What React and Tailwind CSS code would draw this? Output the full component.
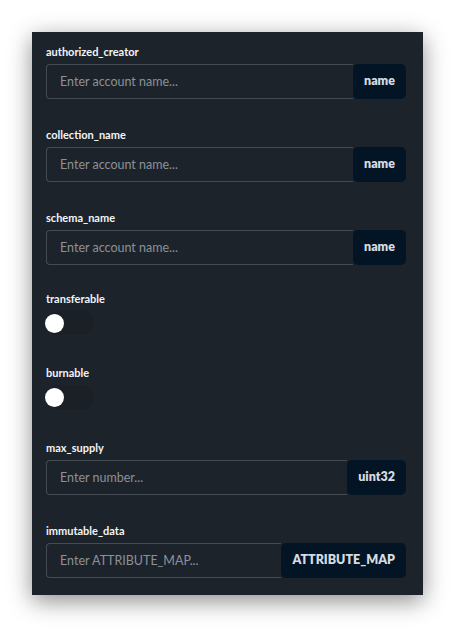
import React, { useState } from "react";

const font = { fontFamily: "Lato, 'Open Sans', sans-serif" };

const TextField = ({ label, placeholder, type, className = "" }) => (
  <div className={className}>
    <label className="block text-[11px] leading-4 font-bold text-[#f2f4f7]">
      {label}
    </label>
    <div className="mt-1 flex h-[35px] w-full">
      <input
        placeholder={placeholder}
        className="h-full min-w-0 flex-1 rounded-l-[4px] border border-r-0 border-[#454b53] bg-transparent pl-[13px] text-[12.5px] text-white placeholder:text-[#8c9198] outline-none"
        style={font}
      />
      <span className="flex h-full items-center rounded-[5px] bg-[#031424] px-[11px] text-[12.5px] font-extrabold text-[#d5dbe3]">
        {type}
      </span>
    </div>
  </div>
);

const Toggle = ({ label, className = "" }) => {
  const [on, setOn] = useState(false);
  return (
    <div className={className}>
      <label className="block text-[11px] leading-4 font-bold text-[#f2f4f7]">
        {label}
      </label>
      <button
        onClick={() => setOn(!on)}
        className="mt-1 flex h-6 w-12 items-center rounded-full bg-[#1b2026]"
      >
        <span
          className={
            on
              ? "ml-auto mr-[2px] h-[19px] w-[19px] rounded-full bg-white"
              : "ml-[-1px] h-[19px] w-[19px] rounded-full bg-white"
          }
        />
      </button>
    </div>
  );
};

export default function App() {
  return (
    <div className="min-h-screen bg-white p-8" style={font}>
      <div className="w-[391px] bg-[#1d232a] pt-3 pb-[17px] pl-[14px] pr-[17px] shadow-[0_6px_22px_rgba(0,0,0,0.45)]">
        <TextField label="authorized_creator" placeholder="Enter account name..." type="name" />
        <TextField label="collection_name" placeholder="Enter account name..." type="name" className="mt-7" />
        <TextField label="schema_name" placeholder="Enter account name..." type="name" className="mt-7" />
        <Toggle label="transferable" className="mt-[26px]" />
        <Toggle label="burnable" className="mt-[30px]" />
        <TextField label="max_supply" placeholder="Enter number..." type="uint32" className="mt-[31px]" />
        <TextField label="immutable_data" placeholder="Enter ATTRIBUTE_MAP..." type="ATTRIBUTE_MAP" className="mt-7" />
      </div>
    </div>
  );
}
